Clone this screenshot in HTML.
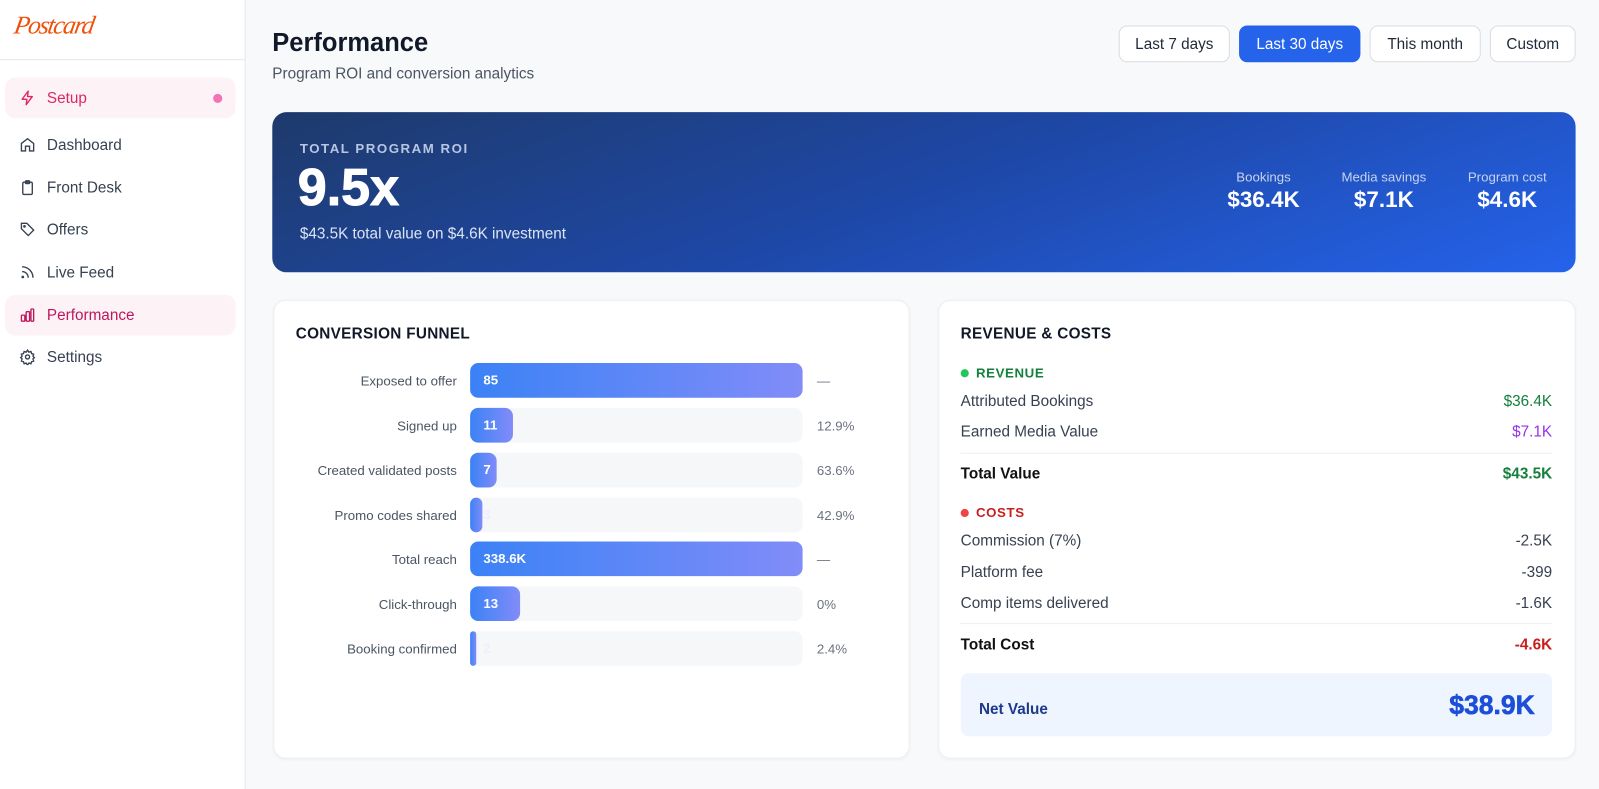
<!DOCTYPE html>
<html><head><meta charset="utf-8"><style>
*{box-sizing:border-box;margin:0;padding:0}
html,body{width:1599px;height:774px;overflow:hidden;background:#f8f9fb}
#w{position:absolute;left:0;top:0;width:1568px;height:759px;transform:scale(1.0198);transform-origin:0 0;font-family:"Liberation Sans",Arial,sans-serif;color:#111827}
.a{position:absolute}
.side{left:0;top:0;width:241px;height:774px;background:#fff;border-right:1px solid #e5e7eb}
.nav{left:5px;width:226px;height:40px;border-radius:10px;display:flex;align-items:center;padding-left:41px;font-size:15px;color:#374151}
.nav svg{position:absolute;left:14px;top:12px}
.btn{top:25px;height:36px;border:1px solid #d9dce1;border-radius:8px;background:#fff;font-size:15px;color:#1f2937;display:flex;align-items:center;justify-content:center}
.card{background:#fff;border:1px solid #eceef1;border-radius:12px;box-shadow:0 1px 3px rgba(0,0,0,.04)}
.lbl{width:180px;text-align:right;font-size:13px;color:#4b5563;left:268px}
.track{left:461px;width:326px;height:34px;background:#f6f7f9;border-radius:8px}
.bar{left:461px;height:34px;border-radius:8px;background:linear-gradient(90deg,#3b82f6,#818cf8);color:#fff;font-size:13px;font-weight:bold;padding-left:13px;line-height:34px}
.pct{left:801px;font-size:13px;color:#6b7280}
.row{left:942px;width:580px;font-size:15px;color:#374151;display:flex;justify-content:space-between}
</style></head><body><div id="w">
<div class="a side"></div>
<div class="a" style="left:0;top:58px;width:241px;height:1px;background:#e5e7eb"></div>
<div class="a" style="left:14px;top:12px;font-family:'Liberation Serif',serif;font-style:italic;font-size:25px;color:#f0500a;letter-spacing:-1.5px;transform:skewX(-10deg)">Postcard</div>

<div class="a nav" style="top:76px;background:#fdf2f6;color:#db2767">Setup
<svg width="16" height="16" viewBox="0 0 24 24" fill="none" stroke="#db2767" stroke-width="2" stroke-linejoin="round"><path d="M13 2L4 14h7l-1 8 9-12h-7z"/></svg>
<span class="a" style="left:204px;top:16px;width:9px;height:9px;border-radius:50%;background:#f472b6"></span></div>
<div class="a nav" style="top:122px">Dashboard<svg width="16" height="16" viewBox="0 0 24 24" fill="none" stroke="#374151" stroke-width="2"><path d="M3 10l9-7 9 7v11h-6v-7H9v7H3z"/></svg></div>
<div class="a nav" style="top:164px">Front Desk<svg width="16" height="16" viewBox="0 0 24 24" fill="none" stroke="#374151" stroke-width="2"><rect x="5" y="4" width="14" height="18" rx="2"/><rect x="9" y="2" width="6" height="4" rx="1"/></svg></div>
<div class="a nav" style="top:205px">Offers<svg width="16" height="16" viewBox="0 0 24 24" fill="none" stroke="#374151" stroke-width="2"><path d="M3 3h8l10 10-8 8L3 11z"/><circle cx="7.5" cy="7.5" r="1"/></svg></div>
<div class="a nav" style="top:247px">Live Feed<svg width="16" height="16" viewBox="0 0 24 24" fill="none" stroke="#374151" stroke-width="2"><path d="M4 11a9 9 0 019 9M4 4a16 16 0 0116 16"/><circle cx="5" cy="19" r="1"/></svg></div>
<div class="a nav" style="top:289px;background:#fdf2f6;color:#be185d">Performance<svg width="16" height="16" viewBox="0 0 24 24" fill="none" stroke="#be185d" stroke-width="2"><rect x="3" y="12" width="5" height="9" rx="1"/><rect x="10" y="7" width="5" height="14" rx="1"/><rect x="17" y="3" width="4" height="18" rx="1"/></svg></div>
<div class="a nav" style="top:330px">Settings<svg width="16" height="16" viewBox="0 0 24 24" fill="none" stroke="#374151" stroke-width="2"><circle cx="12" cy="12" r="3"/><path d="M12 2l2 3 3-1 1 3 3 1-1 3 2 2-2 2 1 3-3 1-1 3-3-1-2 3-2-3-3 1-1-3-3-1 1-3-2-2 2-2-1-3 3-1 1-3 3 1z"/></svg></div>

<div class="a" style="left:267px;top:28px;font-size:25px;font-weight:bold;color:#111827">Performance</div>
<div class="a" style="left:267px;top:64px;font-size:15px;color:#4b5563">Program ROI and conversion analytics</div>

<div class="a btn" style="left:1097px;width:109px">Last 7 days</div>
<div class="a btn" style="left:1215px;width:119px;background:#2563eb;border-color:#2563eb;color:#fff">Last 30 days</div>
<div class="a btn" style="left:1343px;width:109px">This month</div>
<div class="a btn" style="left:1461px;width:84px">Custom</div>

<div class="a" style="left:267px;top:110px;width:1278px;height:157px;border-radius:14px;background:linear-gradient(160deg,#1e3a6b 0%,#1e48a8 50%,#2563eb 100%)"></div>
<div class="a" style="left:294px;top:138px;font-size:13px;letter-spacing:1.5px;color:#b8c6e3;font-weight:bold">TOTAL PROGRAM ROI</div>
<div class="a" style="left:292px;top:154px;font-size:51px;font-weight:bold;color:#fff;-webkit-text-stroke:1px #fff">9.5x</div>
<div class="a" style="left:294px;top:221px;font-size:15px;color:#dbe4f5">$43.5K total value on $4.6K investment</div>
<div class="a" style="left:1195px;top:166px;width:88px;text-align:center;color:#c7d3ec;font-size:13px">Bookings<div style="color:#fff;font-size:22px;font-weight:bold;margin-top:2px">$36.4K</div></div>
<div class="a" style="left:1308px;top:166px;width:98px;text-align:center;color:#c7d3ec;font-size:13px">Media savings<div style="color:#fff;font-size:22px;font-weight:bold;margin-top:2px">$7.1K</div></div>
<div class="a" style="left:1431px;top:166px;width:94px;text-align:center;color:#c7d3ec;font-size:13px">Program cost<div style="color:#fff;font-size:22px;font-weight:bold;margin-top:2px">$4.6K</div></div>

<div class="a card" style="left:268px;top:294px;width:624px;height:450px"></div>
<div class="a" style="left:290px;top:319px;font-size:15px;font-weight:bold;letter-spacing:.3px">CONVERSION FUNNEL</div>

<div class="a lbl" style="top:366px">Exposed to offer</div><div class="a track" style="top:356px"></div><div class="a bar" style="top:356px;width:326px">85</div><div class="a pct" style="top:366px">—</div>
<div class="a lbl" style="top:410px">Signed up</div><div class="a track" style="top:400px"></div><div class="a bar" style="top:400px;width:42px">11</div><div class="a pct" style="top:410px">12.9%</div>
<div class="a lbl" style="top:454px">Created validated posts</div><div class="a track" style="top:444px"></div><div class="a bar" style="top:444px;width:26px;padding-left:13px">7</div><div class="a pct" style="top:454px">63.6%</div>
<div class="a lbl" style="top:498px">Promo codes shared</div><div class="a track" style="top:488px"></div><div class="a bar" style="top:488px;width:12px;padding-left:0;overflow:visible"><span style="margin-left:13px;color:#eef">3</span></div><div class="a pct" style="top:498px">42.9%</div>
<div class="a lbl" style="top:541px">Total reach</div><div class="a track" style="top:531px"></div><div class="a bar" style="top:531px;width:326px">338.6K</div><div class="a pct" style="top:541px">—</div>
<div class="a lbl" style="top:585px">Click-through</div><div class="a track" style="top:575px"></div><div class="a bar" style="top:575px;width:49px">13</div><div class="a pct" style="top:585px">0%</div>
<div class="a lbl" style="top:629px">Booking confirmed</div><div class="a track" style="top:619px"></div><div class="a bar" style="top:619px;width:6px;padding-left:0;overflow:visible"><span style="margin-left:13px;color:#eef">2</span></div><div class="a pct" style="top:629px">2.4%</div>

<div class="a card" style="left:920px;top:294px;width:625px;height:450px"></div>
<div class="a" style="left:942px;top:319px;font-size:15px;font-weight:bold;letter-spacing:.3px">REVENUE &amp; COSTS</div>
<div class="a" style="left:942px;top:358px;font-size:13px;font-weight:bold;color:#15803d;letter-spacing:.6px"><span style="display:inline-block;width:8px;height:8px;border-radius:50%;background:#22c55e;margin-right:7px"></span>REVENUE</div>
<div class="a row" style="top:385px"><span>Attributed Bookings</span><span style="color:#15803d">$36.4K</span></div>
<div class="a row" style="top:415px"><span>Earned Media Value</span><span style="color:#9333ea">$7.1K</span></div>
<div class="a" style="left:942px;top:444px;width:580px;height:1px;background:#eceef1"></div>
<div class="a row" style="top:456px;font-weight:bold;color:#111"><span>Total Value</span><span style="color:#15803d">$43.5K</span></div>
<div class="a" style="left:942px;top:495px;font-size:13px;font-weight:bold;color:#c81e1e;letter-spacing:.6px"><span style="display:inline-block;width:8px;height:8px;border-radius:50%;background:#ef4444;margin-right:7px"></span>COSTS</div>
<div class="a row" style="top:522px"><span>Commission (7%)</span><span>-2.5K</span></div>
<div class="a row" style="top:553px"><span>Platform fee</span><span>-399</span></div>
<div class="a row" style="top:583px"><span>Comp items delivered</span><span>-1.6K</span></div>
<div class="a" style="left:942px;top:611px;width:580px;height:1px;background:#eceef1"></div>
<div class="a row" style="top:624px;font-weight:bold;color:#111"><span>Total Cost</span><span style="color:#c81e1e">-4.6K</span></div>
<div class="a" style="left:942px;top:660px;width:580px;height:62px;border-radius:8px;background:#eff5ff"></div>
<div class="a" style="left:960px;top:687px;font-size:15px;font-weight:bold;color:#1e3a8a">Net Value</div>
<div class="a" style="left:1300px;top:676px;width:205px;text-align:right;font-size:26px;font-weight:bold;color:#1d4ed8;-webkit-text-stroke:.6px #1d4ed8">$38.9K</div>
</div></body></html>
